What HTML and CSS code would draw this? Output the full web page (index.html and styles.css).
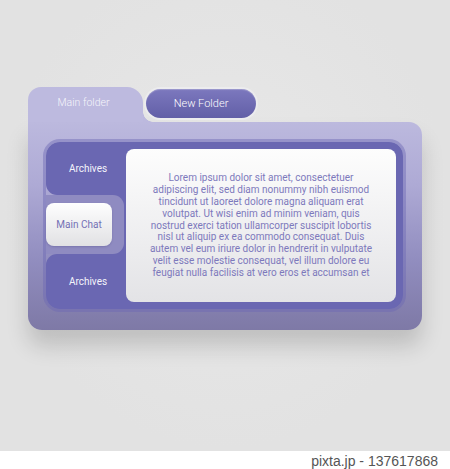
FILE: index.html
```html
<!DOCTYPE html>
<html>
<head>
<meta charset="utf-8">
<link rel="stylesheet" href="styles.css">
</head>
<body>
<div class="stage">
  <div class="card">
    <div class="card-head">
      <div class="tab">Main folder</div>
      <div class="pill">New Folder</div>
    </div>
    <div class="panel">
      <div class="frame">
        <div class="col">
          <div class="arch arch-top">Archives</div>
          <div class="notch"><div class="chat">Main Chat</div></div>
          <div class="arch arch-bot">Archives</div>
        </div>
        <div class="main">
          <div class="content">
            <p class="lorem">Lorem ipsum dolor sit amet, consectetuer<br>adipiscing elit, sed diam nonummy nibh euismod<br>tincidunt ut laoreet dolore magna aliquam erat<br>volutpat. Ut wisi enim ad minim veniam, quis<br>nostrud exerci tation ullamcorper suscipit lobortis<br>nisl ut aliquip ex ea commodo consequat. Duis<br>autem vel eum iriure dolor in hendrerit in vulputate<br>velit esse molestie consequat, vel illum dolore eu<br>feugiat nulla facilisis at vero eros et accumsan et</p>
          </div>
        </div>
      </div>
    </div>
  </div>
</div>
<div class="footer">pixta.jp - 137617868</div>
</body>
</html>
```
FILE: styles.css
```css
html, body {
  margin: 0;
  padding: 0;
}
body {
  width: 450px;
  height: 469px;
  overflow: hidden;
  background: #e3e3e3;
  font-family: Roboto, "Liberation Sans", sans-serif;
}
.stage {
  height: 451px;
  box-sizing: border-box;
  padding: 87px 0 0 28px;
  background: radial-gradient(ellipse at 50% 45%, #e8e8e8 0%, #e2e2e2 70%);
}
.card {
  width: 394px;
}
.card-head {
  display: flex;
  height: 35px;
}
.tab {
  position: relative;
  width: 115px;
  height: 35px;
  box-sizing: border-box;
  padding: 9px 4px 0 0;
  border-radius: 13px 16px 0 0;
  background: #bdbadf;
  color: #f5f5fb;
  font-size: 10.5px;
  font-weight: 300;
  text-align: center;
  line-height: 14px;
}
.tab::after {
  content: "";
  position: absolute;
  right: -10px;
  bottom: 0;
  width: 10px;
  height: 10px;
  background: radial-gradient(circle at 100% 0, transparent 9.5px, #bcb9de 10px);
}
.pill {
  position: relative;
  z-index: 2;
  margin: 2px 0 0 3px;
  width: 110px;
  height: 29px;
  border-radius: 15px;
  background: linear-gradient(#7c78be, #625fa7);
  box-shadow: 0 0 0 2px #ececee, inset 0 1px 1px rgba(255,255,255,0.25);
  color: #ffffff;
  font-size: 11px;
  font-weight: 300;
  line-height: 29px;
  text-align: center;
}
.panel {
  height: 208px;
  box-sizing: border-box;
  padding: 20px 19px 21px 18px;
  border-radius: 0 13px 14px 14px;
  background: linear-gradient(#bcb9de 0%, #aeaad5 30%, #928ec0 65%, #7e79a6 100%);
  box-shadow: 0 16px 22px rgba(0,0,0,0.16);
}
.frame {
  display: flex;
  height: 167px;
  border-radius: 14px;
  box-shadow: 0 0 0 3px rgba(108,104,180,0.45);
}
.col {
  position: relative;
  z-index: 1;
  width: 78px;
  display: flex;
  flex-direction: column;
}
.arch {
  display: flex;
  align-items: center;
  justify-content: center;
  padding-left: 6px;
  background: #6a67b2;
  color: #f4f4fb;
  font-size: 10px;
}
.arch-top {
  height: 53px;
  border-radius: 14px 0 0 11px;
}
.arch-bot {
  height: 55px;
  border-radius: 11px 0 0 14px;
}
.notch {
  height: 59px;
  display: flex;
  align-items: center;
  border-radius: 0 11px 11px 0;
  background: #8f8bc1;
}
.chat {
  width: 66px;
  height: 43px;
  border-radius: 8px;
  background: linear-gradient(#fefefe, #e1e1e4);
  box-shadow: 0 1px 2px rgba(60,55,120,0.25);
  color: #7470b5;
  font-size: 10px;
  line-height: 43px;
  text-align: center;
}
.main {
  flex: 1;
  margin-left: -12px;
  padding: 7px 7px 7px 14px;
  border-radius: 0 14px 14px 0;
  background: #6a67b2;
  display: flex;
}
.content {
  flex: 1;
  display: flex;
  align-items: center;
  justify-content: center;
  border-radius: 8px;
  background: linear-gradient(#fdfdfd, #e3e3e6);
}
.lorem {
  margin: 0;
  color: #7d79bc;
  font-size: 10px;
  line-height: 11.9px;
  text-align: center;
}
.footer {
  height: 18px;
  box-sizing: border-box;
  padding: 1px 12px 0 0;
  background: #ffffff;
  color: #555555;
  font-family: "Liberation Sans", Arial, sans-serif;
  font-size: 14px;
  line-height: 18px;
  text-align: right;
}
```
